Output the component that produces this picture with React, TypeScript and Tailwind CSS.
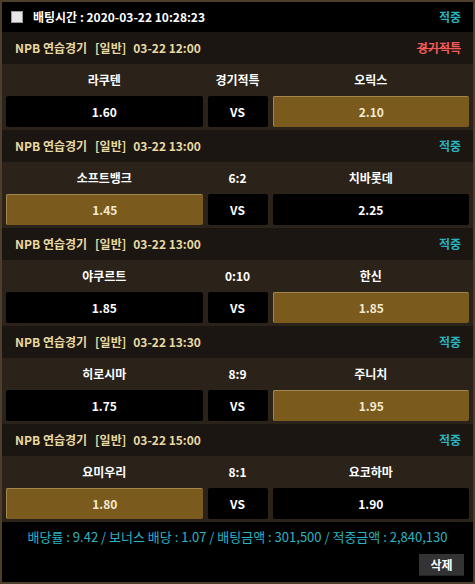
import React from "react"

type Game = {
  time: string
  status: string
  statusRed?: boolean
  home: string
  away: string
  middle: string
  homeOdds: string
  awayOdds: string
  pick: "home" | "away"
}

const games: Game[] = [
  { time: "03-22 12:00", status: "경기적특", statusRed: true, home: "라쿠텐", away: "오릭스", middle: "경기적특", homeOdds: "1.60", awayOdds: "2.10", pick: "away" },
  { time: "03-22 13:00", status: "적중", home: "소프트뱅크", away: "치바롯데", middle: "6:2", homeOdds: "1.45", awayOdds: "2.25", pick: "home" },
  { time: "03-22 13:00", status: "적중", home: "야쿠르트", away: "한신", middle: "0:10", homeOdds: "1.85", awayOdds: "1.85", pick: "away" },
  { time: "03-22 13:30", status: "적중", home: "히로시마", away: "주니치", middle: "8:9", homeOdds: "1.75", awayOdds: "1.95", pick: "away" },
  { time: "03-22 15:00", status: "적중", home: "요미우리", away: "요코하마", middle: "8:1", homeOdds: "1.80", awayOdds: "1.90", pick: "home" },
]

function OddsBox({ value, picked }: { value: string; picked: boolean }) {
  return (
    <div
      className={
        picked
          ? "h-[31px] flex items-center justify-center rounded-[2px] bg-[#7a5a1d] border-t border-l border-[#a3864e] text-[#f3ead2]"
          : "h-[31px] flex items-center justify-center rounded-[2px] bg-black text-white"
      }
    >
      {value}
    </div>
  )
}

function GameBlock({ g }: { g: Game }) {
  return (
    <div>
      <div className="h-[32px] flex items-center justify-between pl-[13px] pr-[12px]">
        <span className="text-[#e8d9a2] flex">
          <span>NPB 연습경기</span>
          <span className="ml-[8px]">[일반]</span>
          <span className="ml-[7px]">{g.time}</span>
        </span>
        <span className={g.statusRed ? "text-[#f05a5a] line-through" : "text-[#2bb3c2]"}>
          {g.status}
        </span>
      </div>
      <div className="bg-[#2b231a] px-[4px] pb-[3px]">
        <div className="grid grid-cols-[1fr_60px_1fr] gap-x-[5px] text-white">
          <div className="h-[32px] flex items-center justify-center">{g.home}</div>
          <div className="h-[32px] flex items-center justify-center">{g.middle}</div>
          <div className="h-[32px] flex items-center justify-center">{g.away}</div>
          <OddsBox value={g.homeOdds} picked={g.pick === "home"} />
          <div className="h-[31px] flex items-center justify-center rounded-[2px] bg-black text-white">VS</div>
          <OddsBox value={g.awayOdds} picked={g.pick === "away"} />
        </div>
      </div>
    </div>
  )
}

export default function App() {
  return (
    <div
      className="w-[475px] h-[584px] border-2 border-[#4d3f2b] bg-[#1b1611] flex flex-col text-[12px] leading-[16px] font-bold overflow-hidden"
      style={{ fontFamily: '"Noto Sans CJK KR", "Noto Sans", sans-serif' }}
    >
      <div className="h-[30px] shrink-0 bg-black flex items-center justify-between pl-[9px] pr-[12px]">
        <div className="flex items-center gap-[10px]">
          <span className="w-[12px] h-[12px] bg-[#e6e6e6] border border-[#9a9a9a]" />
          <span className="text-white">배팅시간 : 2020-03-22 10:28:23</span>
        </div>
        <span className="text-[#2bb3c2]">적중</span>
      </div>
      <div className="flex flex-col shrink-0">
        {games.map((g, i) => (
          <GameBlock key={i} g={g} />
        ))}
      </div>
      <div className="flex-1 bg-black flex flex-col">
        <div className="text-center text-[#2bb3c2] font-normal text-[13px] mt-[7px]">
          배당률 : 9.42 / 보너스 배당 : 1.07 / 배팅금액 : 301,500 / 적중금액 : 2,840,130
        </div>
        <div className="flex justify-end pr-[9px] mt-[9px]">
          <button className="w-[45px] h-[22px] bg-[#333333] text-white border-b border-[#222]">삭제</button>
        </div>
      </div>
    </div>
  )
}
